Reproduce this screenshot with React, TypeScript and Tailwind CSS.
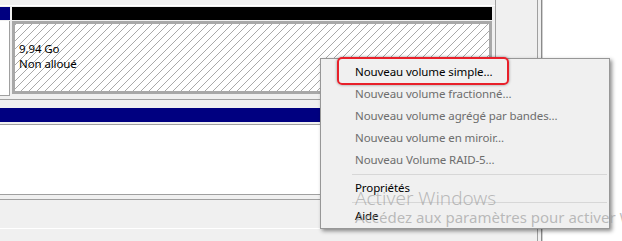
const items = [
  { label: 'Nouveau volume simple...', enabled: true },
  { label: 'Nouveau volume fractionné...', enabled: false },
  { label: 'Nouveau volume agrégé par bandes...', enabled: false },
  { label: 'Nouveau volume en miroir...', enabled: false },
  { label: 'Nouveau Volume RAID-5...', enabled: false },
];

function MenuItem({ label, enabled }: { label: string; enabled: boolean }) {
  return (
    <div className={`h-[22px] pl-[34px] leading-[22px] whitespace-nowrap ${enabled ? 'text-black' : 'text-[#6d6d6d]'}`}>
      {label}
    </div>
  );
}

function ContextMenu() {
  return (
    <div className="absolute left-[320px] top-[58px] w-[290px] border border-[#979797] bg-[#f0f0f0] pt-[2px] pb-px shadow-[2px_2px_4px_rgba(0,0,0,0.45)]">
      {items.map((it) => (
        <MenuItem key={it.label} label={it.label} enabled={it.enabled} />
      ))}
      <div className="ml-[31px] mr-[2px] mt-[3px] mb-[2px] h-px bg-[#d7d7d7]" />
      <MenuItem label="Propriétés" enabled />
      <div className="ml-[31px] mr-[2px] mt-[3px] mb-[2px] h-px bg-[#d7d7d7]" />
      <MenuItem label="Aide" enabled />
    </div>
  );
}

export default function App() {
  return (
    <div className="relative flex h-[241px] w-[622px] overflow-hidden bg-[#f0f0f0] font-['Noto_Sans',sans-serif] text-[11.5px] tracking-[-0.1px] text-black">
      {/* volet gauche : disques */}
      <div className="flex w-[537px] flex-col">
        <div className="flex w-[496px] flex-col border-r border-r-[#a0a0a0]">
          <div className="h-[5px]" />
          <div className="h-px bg-white" />
          <div className="h-px" />
          <div className="flex gap-[2px]">
            {/* colonne disque */}
            <div className="flex w-[10px] flex-col gap-px">
              <div className="h-[13px] bg-[#000080]" />
              <div className="h-[75px] border-r border-b border-[#a0a0a0] bg-white" />
            </div>
            {/* partition non allouée */}
            <div className="flex w-[480px] flex-col gap-px">
              <div className="h-[13px] bg-black" />
              <div className="h-[73px] border-[3px] border-[#a8a8a8] bg-[repeating-linear-gradient(135deg,#a9a9a9_0px,#a9a9a9_1px,#ffffff_1px,#ffffff_5.66px)] pl-[4px] pt-[17px] leading-[15px]">
                <div>9,94 Go</div>
                <div>Non alloué</div>
              </div>
            </div>
          </div>
          <div className="h-[3px]" />
        </div>
        <div className="h-px bg-[#a0a0a0]" />
        <div className="h-[8px]" />
        <div className="h-[14px] w-[496px] bg-[#000080]" />
        <div className="h-[2px]" />
        <div className="h-px bg-[#a0a0a0]" />
        <div className="h-[69px] bg-white" />
        <div className="h-px bg-[#a0a0a0]" />
        <div className="h-[4px]" />
        <div className="h-px bg-[#a0a0a0]" />
        <div className="h-[28px]" />
        <div className="h-px bg-white" />
        <div className="flex-1" />
      </div>

      {/* séparateur */}
      <div className="flex w-[6px]">
        <div className="w-px bg-[#a0a0a0]" />
        <div className="w-[3px]" />
        <div className="w-px bg-[#8a8a8a]" />
        <div className="w-px bg-[#d0d0d0]" />
      </div>

      {/* volet droit */}
      <div className="flex-1 bg-white" />

      <ContextMenu />

      {/* encadré rouge */}
      <div className="absolute left-[337px] top-[57px] h-[28px] w-[172px] rounded-[5px] border-2 border-[#e8202a] shadow-[0_0_3px_rgba(0,0,0,0.4)]" />

      {/* filigrane */}
      <div className="pointer-events-none absolute left-[355px] top-[189px] whitespace-nowrap text-[19px] leading-none font-light tracking-normal text-[#a0a0a0]/70">
        Activer Windows
      </div>
      <div className="pointer-events-none absolute left-[355px] top-[210px] whitespace-nowrap text-[15px] leading-none tracking-normal text-[#a0a0a0]/70">
        Accédez aux paramètres pour activer Windows.
      </div>
    </div>
  );
}
